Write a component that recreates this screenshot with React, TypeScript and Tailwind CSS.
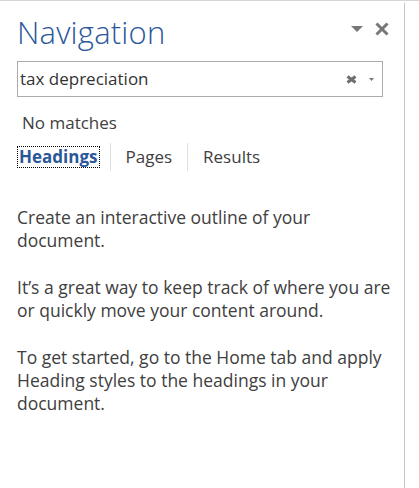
import React from "react";

function TriangleDown({ className }: { className?: string }) {
    return (
        <svg viewBox="0 0 12 6" preserveAspectRatio="none" className={className}>
            <path d="M0 0 H12 L6 6 Z" fill="currentColor" />
        </svg>
    );
}

function CloseX({
    className,
    view = 14,
    viewH = 14,
    stroke = 3,
}: {
    className?: string;
    view?: number;
    viewH?: number;
    stroke?: number;
}) {
    const p = stroke / 2;
    return (
        <svg viewBox={`0 0 ${view} ${viewH}`} className={className}>
            <path
                d={`M${p} ${p} L${view - p} ${viewH - p} M${view - p} ${p} L${p} ${viewH - p}`}
                stroke="currentColor"
                strokeWidth={stroke}
                fill="none"
            />
        </svg>
    );
}

export default function App() {
    const tabs = ["Headings", "Pages", "Results"];

    return (
        <div className="h-[488px] w-[419px] overflow-hidden bg-white border-t border-[#d6d6d6] font-['Segoe_UI','Open_Sans',sans-serif] text-[#404040]">

            <div className="mt-[2px] h-[486px] w-[405px] border-r border-[#c6c6c6]">

                {/* Header */}

                <div className="flex items-start justify-between pl-[17px] pr-[15px] h-[58px]">
                    <h1 className="mt-[10px] text-[31px] leading-[38px] font-light text-[#2b579a] tracking-[0.2px]">
                        Navigation
                    </h1>

                    <div className="flex items-center gap-[12px] mt-[19px] text-[#777777]">
                        <TriangleDown className="w-[12px] h-[6px]" />
                        <CloseX className="w-[14px] h-[14px]" />
                    </div>
                </div>

                {/* Search */}

                <div className="ml-[17px] w-[366px] h-[36px] border border-[#ababab] flex items-center pl-[2px] pr-[8px]">
                    <span className="flex-1 text-[17px] text-[#333333]">
                        tax depreciation
                    </span>
                    <CloseX
                        className="w-[11px] h-[9px] text-[#6f6f6f]"
                        view={11}
                        viewH={9}
                        stroke={3}
                    />
                    <TriangleDown className="ml-[12px] w-[5px] h-[3px] text-[#777777]" />
                </div>

                <p className="mt-[16px] ml-[22px] text-[17px] leading-[20px]">
                    No matches
                </p>

                {/* Tabs */}

                <div className="mt-[10px] ml-[17px] flex items-center h-[28px]">
                    {tabs.map((tab, i) => (
                        <div key={tab} className="flex items-center h-full">
                            {i > 0 && (
                                <div className="w-px h-full bg-[#e1e1e1]" />
                            )}
                            {i === 0 ? (
                                <span className="mr-[10px] px-[1px] border border-dotted border-black text-[17px] leading-[20px] font-bold text-[#2b579a]">
                                    {tab}
                                </span>
                            ) : (
                                <span className="px-[15px] text-[17px] leading-[20px]">
                                    {tab}
                                </span>
                            )}
                        </div>
                    ))}
                </div>

                {/* Body */}

                <div className="mt-[35px] ml-[17px] text-[17.5px] leading-[23px] flex flex-col gap-[24px]">
                    <p>
                        Create an interactive outline of your
                        <br />
                        document.
                    </p>
                    <p>
                        It’s a great way to keep track of where you are
                        <br />
                        or quickly move your content around.
                    </p>
                    <p>
                        To get started, go to the Home tab and apply
                        <br />
                        Heading styles to the headings in your
                        <br />
                        document.
                    </p>
                </div>

            </div>

        </div>
    );
}
